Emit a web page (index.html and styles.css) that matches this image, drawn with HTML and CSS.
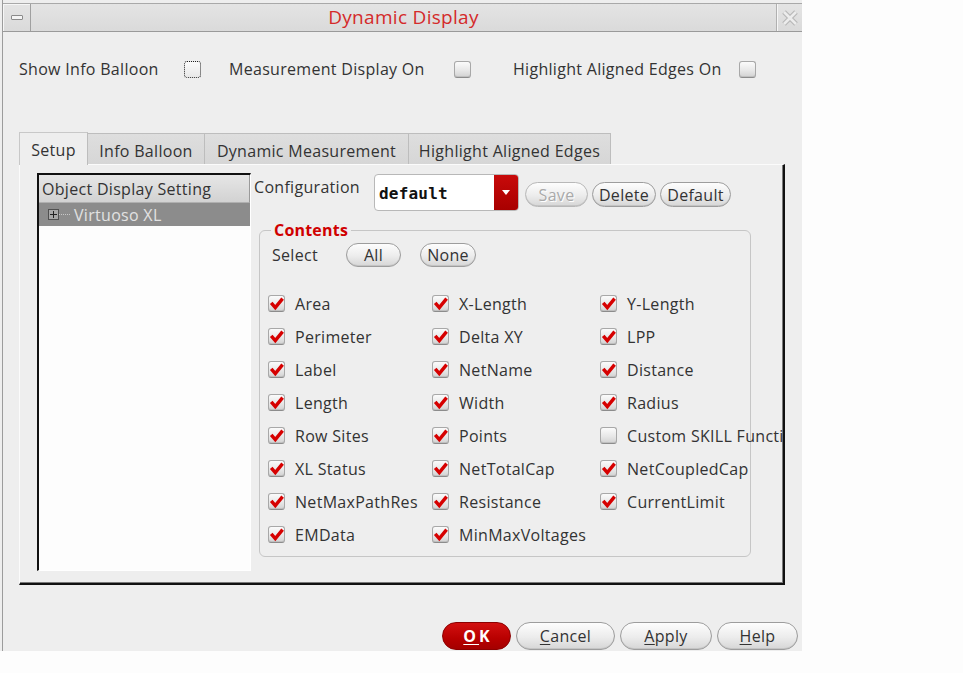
FILE: index.html
```html
<!DOCTYPE html>
<html>
<head>
<meta charset="utf-8">
<link rel="stylesheet" href="styles.css">
</head>
<body>
<div class="window">
 <div class="frame">
  <div class="titlebar">
   <div class="tb-menu"><span class="dash"></span></div>
   <div class="tb-title">Dynamic Display</div>
   <div class="tb-close"><svg viewBox="0 0 20 20" width="20" height="20"><path class="xo" d="M4 4 L16 16 M16 4 L4 16"/><path class="xi" d="M4 4 L16 16 M16 4 L4 16"/></svg></div>
  </div>

  <div class="toprow">
   <span class="tl l1">Show Info Balloon</span>
   <span class="cb focus"></span>
   <span class="tl l2">Measurement Display On</span>
   <span class="cb"></span>
   <span class="tl l3">Highlight Aligned Edges On</span>
   <span class="cb"></span>
  </div>

  <div class="tabs">
   <div class="tab active t1">Setup</div>
   <div class="tab t2">Info Balloon</div>
   <div class="tab t3">Dynamic Measurement</div>
   <div class="tab t4">Highlight Aligned Edges</div>
  </div>

  <div class="panel">
   <div class="tree">
    <div class="tree-head">Object Display Setting</div>
    <div class="tree-row"><span class="plus"></span><span class="dots"></span><span class="tree-text">Virtuoso XL</span></div>
   </div>
   <div class="rightcol">
    <div class="configrow">
     <span class="cfg-label">Configuration</span>
     <div class="combo"><span class="combo-text">default</span><span class="combo-arrow"><span class="tri"></span></span></div>
     <div class="cfg-btns">
      <span class="btn disabled w-save">Save</span>
      <span class="btn w-delete">Delete</span>
      <span class="btn w-default">Default</span>
     </div>
    </div>
    <div class="group">
     <div class="group-title">Contents</div>
     <div class="selectrow">
      <span class="sel-label">Select</span>
      <span class="btn sm w-all">All</span>
      <span class="btn sm w-none">None</span>
     </div>
     <div class="grid">
      <div class="item"><span class="cb on"><svg viewBox="0 0 17 17"><path d="M3.2 7.8 L7.3 12.6 L14.6 3.6"/></svg></span><span>Area</span></div>
      <div class="item"><span class="cb on"><svg viewBox="0 0 17 17"><path d="M3.2 7.8 L7.3 12.6 L14.6 3.6"/></svg></span><span>X-Length</span></div>
      <div class="item"><span class="cb on"><svg viewBox="0 0 17 17"><path d="M3.2 7.8 L7.3 12.6 L14.6 3.6"/></svg></span><span>Y-Length</span></div>

      <div class="item"><span class="cb on"><svg viewBox="0 0 17 17"><path d="M3.2 7.8 L7.3 12.6 L14.6 3.6"/></svg></span><span>Perimeter</span></div>
      <div class="item"><span class="cb on"><svg viewBox="0 0 17 17"><path d="M3.2 7.8 L7.3 12.6 L14.6 3.6"/></svg></span><span>Delta XY</span></div>
      <div class="item"><span class="cb on"><svg viewBox="0 0 17 17"><path d="M3.2 7.8 L7.3 12.6 L14.6 3.6"/></svg></span><span>LPP</span></div>

      <div class="item"><span class="cb on"><svg viewBox="0 0 17 17"><path d="M3.2 7.8 L7.3 12.6 L14.6 3.6"/></svg></span><span>Label</span></div>
      <div class="item"><span class="cb on"><svg viewBox="0 0 17 17"><path d="M3.2 7.8 L7.3 12.6 L14.6 3.6"/></svg></span><span>NetName</span></div>
      <div class="item"><span class="cb on"><svg viewBox="0 0 17 17"><path d="M3.2 7.8 L7.3 12.6 L14.6 3.6"/></svg></span><span>Distance</span></div>

      <div class="item"><span class="cb on"><svg viewBox="0 0 17 17"><path d="M3.2 7.8 L7.3 12.6 L14.6 3.6"/></svg></span><span>Length</span></div>
      <div class="item"><span class="cb on"><svg viewBox="0 0 17 17"><path d="M3.2 7.8 L7.3 12.6 L14.6 3.6"/></svg></span><span>Width</span></div>
      <div class="item"><span class="cb on"><svg viewBox="0 0 17 17"><path d="M3.2 7.8 L7.3 12.6 L14.6 3.6"/></svg></span><span>Radius</span></div>

      <div class="item"><span class="cb on"><svg viewBox="0 0 17 17"><path d="M3.2 7.8 L7.3 12.6 L14.6 3.6"/></svg></span><span>Row Sites</span></div>
      <div class="item"><span class="cb on"><svg viewBox="0 0 17 17"><path d="M3.2 7.8 L7.3 12.6 L14.6 3.6"/></svg></span><span>Points</span></div>
      <div class="item"><span class="cb"></span><span>Custom SKILL Function</span></div>

      <div class="item"><span class="cb on"><svg viewBox="0 0 17 17"><path d="M3.2 7.8 L7.3 12.6 L14.6 3.6"/></svg></span><span>XL Status</span></div>
      <div class="item"><span class="cb on"><svg viewBox="0 0 17 17"><path d="M3.2 7.8 L7.3 12.6 L14.6 3.6"/></svg></span><span>NetTotalCap</span></div>
      <div class="item"><span class="cb on"><svg viewBox="0 0 17 17"><path d="M3.2 7.8 L7.3 12.6 L14.6 3.6"/></svg></span><span>NetCoupledCap</span></div>

      <div class="item"><span class="cb on"><svg viewBox="0 0 17 17"><path d="M3.2 7.8 L7.3 12.6 L14.6 3.6"/></svg></span><span>NetMaxPathRes</span></div>
      <div class="item"><span class="cb on"><svg viewBox="0 0 17 17"><path d="M3.2 7.8 L7.3 12.6 L14.6 3.6"/></svg></span><span>Resistance</span></div>
      <div class="item"><span class="cb on"><svg viewBox="0 0 17 17"><path d="M3.2 7.8 L7.3 12.6 L14.6 3.6"/></svg></span><span>CurrentLimit</span></div>

      <div class="item"><span class="cb on"><svg viewBox="0 0 17 17"><path d="M3.2 7.8 L7.3 12.6 L14.6 3.6"/></svg></span><span>EMData</span></div>
      <div class="item"><span class="cb on"><svg viewBox="0 0 17 17"><path d="M3.2 7.8 L7.3 12.6 L14.6 3.6"/></svg></span><span>MinMaxVoltages</span></div>
     </div>
    </div>
   </div>
  </div>

  <div class="buttons">
   <span class="btn big ok w-ok"><u>O</u>K</span>
   <span class="btn big w-cancel"><u>C</u>ancel</span>
   <span class="btn big w-apply"><u>A</u>pply</span>
   <span class="btn big w-help"><u>H</u>elp</span>
  </div>
 </div>
</div>
</body>
</html>
```

FILE: styles.css
```css
* { box-sizing: border-box; }
html, body { margin: 0; padding: 0; }
body {
  background: #fdfdfd;
  width: 963px;
  height: 673px;
  overflow: hidden;
  font-family: "Open Sans", "Noto Sans", sans-serif;
  font-size: 16px;
  letter-spacing: 0.3px;
  color: #333333;
}
.window {
  width: 802px;
  height: 651px;
  background: #eeeeee;
  padding-left: 2px;
}
.frame {
  height: 100%;
  border-left: 1px solid #9c9c9c;
  display: flex;
  flex-direction: column;
}

/* title bar */
.titlebar {
  margin-top: 3px;
  height: 29px;
  display: flex;
  border-top: 1px solid #a9a9a9;
  border-bottom: 1px solid #9a9a9a;
  background: linear-gradient(#e4e4e4, #dadada);
}
.tb-menu {
  width: 28px;
  border-right: 1px solid #a0a0a0;
  box-shadow: inset 1px 1px 0 #f6f6f6;
  display: flex;
  align-items: center;
  justify-content: center;
}
.dash {
  width: 12px;
  height: 5px;
  border: 1px solid #8a8a8a;
  background: #f4f4f4;
  border-radius: 1px;
}
.tb-title {
  flex: 1;
  text-align: center;
  color: #d42a2a;
  font-size: 19px;
  line-height: 27px;
}
.tb-close {
  width: 26px;
  border-left: 1px solid #b0b0b0;
  box-shadow: inset 1px 0 0 #f6f6f6;
  display: flex;
  align-items: center;
  justify-content: center;
}
.tb-close svg { display: block; }
.xo { stroke: #b8b8b8; stroke-width: 5; fill: none; }
.xi { stroke: #ececec; stroke-width: 2.6; fill: none; }

/* top row */
.toprow {
  margin-top: 20px;
  height: 34px;
  padding-left: 16px;
  display: flex;
  align-items: center;
  white-space: nowrap;
}
.tl { display: block; }
.l1 { width: 165px; }
.l2 { width: 225px; margin-left: 28px; }
.l3 { width: 226px; margin-left: 42px; }

.cb {
  flex: none;
  width: 17px;
  height: 17px;
  border: 1px solid #a8a8a8;
  border-bottom-color: #8c8c8c;
  border-radius: 3px;
  background: linear-gradient(#fbfbfb, #e6e6e6 60%, #d2d2d2);
  box-shadow: inset 0 -1px 0 #c0c0c0;
  display: block;
}
.cb.focus {
  border: 1px dotted #222;
  background: linear-gradient(#fbfbfb, #e8e8e8);
  box-shadow: none;
}
.cb svg { display: block; width: 17px; height: 17px; margin: -1px; }
.cb svg path { fill: none; stroke: #d60000; stroke-width: 3.4; stroke-linejoin: miter; }

/* tabs */
.tabs {
  margin-top: 46px;
  margin-bottom: -1px;
  padding-left: 16px;
  height: 33px;
  display: flex;
  align-items: flex-end;
}
.tab {
  height: 32px;
  border: 1px solid #bdbdbd;
  border-bottom: none;
  border-left: none;
  background: linear-gradient(#dedede, #d6d6d6);
  text-align: center;
  line-height: 34px;
  white-space: nowrap;
}
.tab.active {
  position: relative;
  z-index: 1;
  height: 33px;
  background: #eeeeee;
  border-left: 1px solid #c8c8c8;
  border-top: 1px solid #c8c8c8;
  line-height: 35px;
}
.t1 { width: 69px; }
.t2 { width: 117px; }
.t3 { width: 204px; }
.t4 { width: 202px; }

/* panel */
.panel {
  margin-left: 16px;
  width: 766px;
  height: 421px;
  border-top: 1px solid #fbfbfb;
  border-left: 1px solid #fbfbfb;
  border-right: 2px solid #111111;
  border-bottom: 2px solid #111111;
  box-shadow: inset -1px -1px 0 #7a7a7a;
  padding: 8px 0 0 17px;
  display: flex;
  align-items: flex-start;
  overflow: hidden;
}
.tree {
  flex: none;
  width: 214px;
  height: 398px;
  background: #fdfdfd;
  border-top: 2px solid #111;
  border-left: 2px solid #111;
  border-right: 1px solid #ffffff;
  border-bottom: 1px solid #ffffff;
}
.tree-head {
  height: 28px;
  line-height: 28px;
  padding-left: 3px;
  background: linear-gradient(#e6e6e6, #d2d2d2);
  border-right: 1px solid #9a9a9a;
  border-bottom: 1px solid #b0b0b0;
  white-space: nowrap;
}
.tree-row {
  height: 23px;
  background: #8c8c8c;
  display: flex;
  align-items: center;
  padding-left: 9px;
}
.plus {
  width: 11px;
  height: 11px;
  border: 1px solid #505050;
  background:
    linear-gradient(#222, #222) center / 7px 1px no-repeat,
    linear-gradient(#222, #222) center / 1px 7px no-repeat,
    #a8a8a8;
}
.dots {
  width: 11px;
  height: 1px;
  border-top: 1px dotted #c8c8c8;
  margin-right: 4px;
}
.tree-text { color: #e2e2e2; white-space: nowrap; }

.rightcol {
  margin-left: 3px;
  display: flex;
  flex-direction: column;
}
.configrow {
  margin-top: 1px;
  display: flex;
  align-items: flex-start;
  white-space: nowrap;
}
.cfg-label {
  width: 120px;
  margin-top: 2px;
  line-height: 22px;
}
.combo {
  width: 145px;
  height: 37px;
  border: 1px solid #b8b8b8;
  border-radius: 4px;
  background: #ffffff;
  display: flex;
  overflow: hidden;
}
.combo-text {
  flex: 1;
  padding-left: 4px;
  font-family: "DejaVu Sans Mono", "Liberation Mono", monospace;
  font-weight: bold;
  font-size: 16px;
  letter-spacing: 0.2px;
  line-height: 37px;
  color: #111;
}
.combo-arrow {
  width: 24px;
  background: linear-gradient(#c80a0a, #a80000);
  display: flex;
  justify-content: center;
  padding-top: 15px;
}
.tri {
  width: 0;
  height: 0;
  border-left: 4px solid transparent;
  border-right: 4px solid transparent;
  border-top: 5px solid #ffffff;
}
.cfg-btns {
  margin-left: 6px;
  margin-top: 8px;
  display: flex;
  gap: 4px;
}

.btn {
  display: flex;
  align-items: center;
  justify-content: center;
  height: 25px;
  border: 1px solid #9d9d9d;
  border-radius: 13px;
  background: linear-gradient(#fdfdfd, #ececec 55%, #d6d6d6);
  box-shadow: inset 0 -1px 0 #c4c4c4;
  color: #333;
  white-space: nowrap;
}
.btn.disabled { color: #a9a9a9; text-shadow: 1px 1px 0 #ffffff; border-color: #b8b8b8; }
.w-save { width: 63px; }
.w-delete { width: 64px; }
.w-default { width: 71px; }
.btn.sm { height: 24px; }
.w-all { width: 55px; }
.w-none { width: 56px; margin-left: 19px; }

/* group */
.group {
  margin-left: 5px;
  margin-top: 19px;
  width: 492px;
  height: 327px;
  border: 1px solid #c6c6c6;
  border-radius: 6px;
  display: flex;
  flex-direction: column;
}
.group-title {
  align-self: flex-start;
  margin: -11px 0 0 11px;
  padding: 0 3px;
  background: #eeeeee;
  color: #d00000;
  font-weight: bold;
  letter-spacing: 0.2px;
  line-height: 20px;
}
.selectrow {
  margin-top: 3px;
  padding-left: 12px;
  display: flex;
  align-items: center;
}
.sel-label { width: 74px; }

.grid {
  margin-top: 20px;
  padding-left: 8px;
  display: grid;
  grid-template-columns: 164px 168px 150px;
  grid-auto-rows: 33px;
}
.item {
  display: flex;
  align-items: center;
  gap: 10px;
  white-space: nowrap;
}

/* bottom buttons */
.buttons {
  margin-top: 37px;
  padding-right: 4px;
  display: flex;
  justify-content: flex-end;
  gap: 5px;
}
.btn.big { height: 28px; border-radius: 14px; }
.btn u { text-decoration-thickness: 1px; text-underline-offset: 2px; }
.btn.ok {
  background: linear-gradient(#d21010, #b80000 60%, #a40000);
  border-color: #8c0000;
  box-shadow: none;
  color: #ffffff;
  font-weight: bold;
  letter-spacing: 3px;
  padding-left: 3px;
}
.w-ok { width: 69px; }
.w-cancel { width: 99px; }
.w-apply { width: 92px; }
.w-help { width: 81px; }
```
